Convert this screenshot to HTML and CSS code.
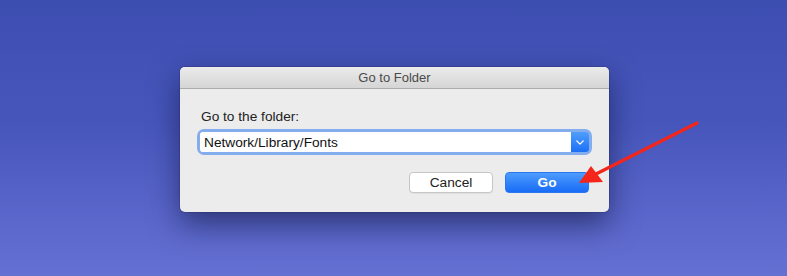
FILE: index.html
```html
<!DOCTYPE html>
<html lang="en">
<head>
    <meta charset="UTF-8">
    <meta name="viewport" content="width=device-width, initial-scale=1.0">
    <title>Go to Folder</title>
    <link rel="stylesheet" href="styles.css">
</head>
<body>
    <div class="desktop">
        <div class="dialog">
            <div class="titlebar">Go to Folder</div>
            <div class="content">
                <label for="folder">Go to the folder:</label>
                <div class="combo">
                    <input type="text" id="folder" value="Network/Library/Fonts">
                    <span class="combo-btn">
                        <svg viewBox="0 0 10 6" width="8" height="5">
                            <path d="M1 1L5 5L9 1" stroke="#fff" stroke-width="1.6" fill="none" stroke-linecap="round" stroke-linejoin="round"/>
                        </svg>
                    </span>
                </div>
                <div class="actions">
                    <button class="btn btn-cancel">Cancel</button>
                    <button class="btn btn-go">Go</button>
                </div>
            </div>
        </div>

        <!-- annotation arrow pointing at the Go button -->
        <svg class="arrow" viewBox="0 0 787 276" width="787" height="276">
            <line x1="697" y1="123" x2="596" y2="174" stroke="#f4261b" stroke-width="3.2" stroke-linecap="round"/>
            <polygon points="579,183 591,166 603,182" fill="#f4261b"/>
        </svg>
    </div>
</body>
</html>
```

FILE: styles.css
```css
body {
    margin: 0;
    font-family: "Liberation Sans", Arial, sans-serif;
    font-size: 13.7px;
}
.desktop {
    position: relative;
    height: 276px;
    overflow: hidden;
    background: linear-gradient(180deg, #3d4eb1 0%, #4756bb 45%, #5b67cb 80%, #6570d3 100%);
    display: flex;
    justify-content: center;
    align-items: flex-start;
    padding: 67px 0 0 2px;
    box-sizing: border-box;
}
.dialog {
    width: 429px;
    background: #ececec;
    border-radius: 5px;
    box-shadow: 0 12px 30px rgba(10, 15, 50, 0.55), 0 0 0 1px rgba(0, 0, 0, 0.12);
    overflow: hidden;
}
.titlebar {
    height: 21px;
    line-height: 21px;
    text-align: center;
    color: #4a4a4a;
    font-size: 13px;
    background: linear-gradient(180deg, #ebebeb, #d5d5d5);
    border-bottom: 1px solid #acacac;
}
.content {
    padding: 20px 20px 19px 20px;
}
label {
    display: block;
    height: 16px;
    line-height: 16px;
    color: #222;
    margin-bottom: 7px;
    padding-left: 1px;
}
.combo {
    display: flex;
    height: 20px;
    border-radius: 4px;
    box-shadow: 0 0 0 3px #84adee;
}
.combo input {
    flex: 1;
    min-width: 0;
    height: 20px;
    border: none;
    padding: 0 4px;
    margin: 0;
    font-family: inherit;
    font-size: 13.7px;
    color: #111;
    background: #fff;
    border-radius: 3px 0 0 3px;
    box-sizing: border-box;
    outline: none;
}
.combo-btn {
    width: 18px;
    display: flex;
    align-items: center;
    justify-content: center;
    background: linear-gradient(180deg, #4f9efd, #1c6ff6);
    border-radius: 0 3px 3px 0;
}
.actions {
    display: flex;
    justify-content: flex-end;
    gap: 12px;
    margin-top: 20px;
}
.btn {
    width: 84px;
    height: 21px;
    border-radius: 4px;
    font-family: inherit;
    font-size: 13.7px;
    padding: 0;
    cursor: pointer;
}
.btn-cancel {
    background: #fff;
    border: 1px solid #c6c6c6;
    color: #222;
    box-shadow: 0 1px 0 rgba(0, 0, 0, 0.05);
}
.btn-go {
    background: linear-gradient(180deg, #4d9cfd, #196cf6);
    border: 1px solid #2a78f0;
    color: #fff;
    font-weight: 600;
}
.arrow {
    position: absolute;
    left: 0;
    top: 0;
    pointer-events: none;
}
```
